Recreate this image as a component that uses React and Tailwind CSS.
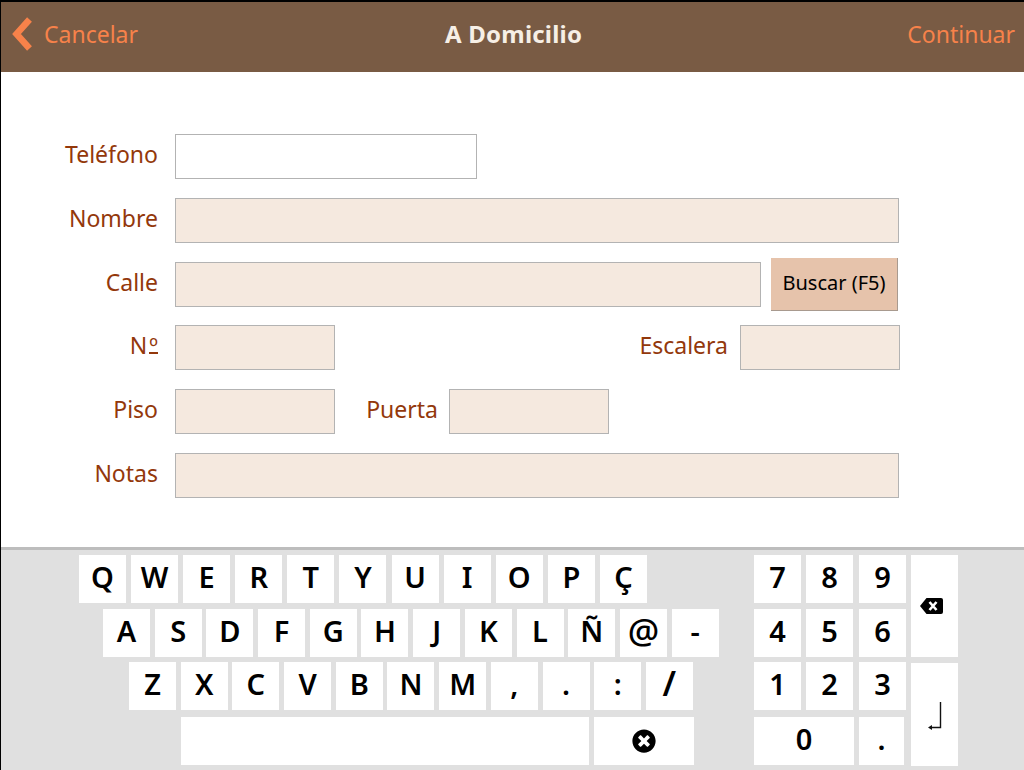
import React from 'react';
import { FaTimesCircle } from 'react-icons/fa';

const Field = ({ className = '', white }) => (
  <div className={`h-[45px] border border-[#b3b3b3] ${white ? 'bg-white' : 'bg-[#f5e9df]'} ${className}`} />
);

const Label = ({ children, className = 'w-[157px]' }) => (
  <span className={`text-right text-[23px] leading-none pb-[4px] text-[#93380b] ${className}`}>{children}</span>
);

const Key = ({ children, className = 'w-[47px]' }) => (
  <div className={`h-[48px] bg-white flex items-center justify-center pb-[6px] text-[29px] font-semibold leading-none text-black ${className}`}>
    {children}
  </div>
);

const big = { '@': 'text-[35px] font-medium', '/': 'text-[34px]' };
const row1 = ['Q', 'W', 'E', 'R', 'T', 'Y', 'U', 'I', 'O', 'P', 'Ç'];
const row2 = ['A', 'S', 'D', 'F', 'G', 'H', 'J', 'K', 'L', 'Ñ', '@', '-'];
const row3 = ['Z', 'X', 'C', 'V', 'B', 'N', 'M', ',', '.', ':', '/'];

const renderKey = (k) => (
  <Key key={k}>{big[k] ? <span className={big[k]}>{k}</span> : k}</Key>
);

const App = () => {
  return (
    <div className="w-[1024px] h-[770px] overflow-hidden bg-white flex flex-col border-l border-l-black font-['Noto_Sans',sans-serif]">
      {/* Header */}
      <header className="h-[72px] shrink-0 border-t-2 border-t-black bg-[#795b44] flex items-center justify-between pl-[10px] pr-[9px] pb-[6px]">
        <div className="flex items-center gap-[11px] text-[23px] text-[#f7824a]">
          <svg width="22" height="34" viewBox="0 0 22 34" fill="none" className="-mt-[1px]">
            <path d="M18.5 2.5L5.5 17L18.5 31.5" stroke="#f7824a" strokeWidth="6.5" />
          </svg>
          <span>Cancelar</span>
        </div>
        <span className="font-bold text-[24px] tracking-[0.2px] text-[#f6efe6] mr-[18px]">A Domicilio</span>
        <span className="text-[23px] text-[#f7824a]">Continuar</span>
      </header>

      {/* Form */}
      <main className="flex-1 pt-[62px] flex flex-col">
        <div className="flex items-center gap-[17px]">
          <Label>Teléfono</Label>
          <Field white className="w-[302px]" />
        </div>
        <div className="flex items-center gap-[17px] mt-[19px]">
          <Label>Nombre</Label>
          <Field className="w-[724px]" />
        </div>
        <div className="flex items-center gap-[17px] mt-[19px]">
          <Label>Calle</Label>
          <Field className="w-[586px]" />
          <button className="-my-[4px] -ml-[7px] h-[53px] w-[127px] pb-[3px] bg-[#e6c3ab] border-b border-r border-[#a89a8f] text-[20px] text-black">
            Buscar (F5)
          </button>
        </div>
        <div className="flex items-center gap-[17px] mt-[18px]">
          <Label>
            N<span className="inline-block ml-[2px] h-[17px] leading-[17px] border-b-2 border-[#93380b]">º</span>
          </Label>
          <Field className="w-[160px]" />
          <Label className="w-[376px]">Escalera</Label>
          <Field className="-ml-[5px] w-[160px]" />
        </div>
        <div className="flex items-center gap-[17px] mt-[19px]">
          <Label>Piso</Label>
          <Field className="w-[160px]" />
          <Label className="ml-[14px] w-[72px]">Puerta</Label>
          <Field className="-ml-[6px] w-[160px]" />
        </div>
        <div className="flex items-center gap-[17px] mt-[19px]">
          <Label>Notas</Label>
          <Field className="w-[724px]" />
        </div>
      </main>

      {/* Keyboard */}
      <footer className="h-[223px] shrink-0 border-t-[3px] border-[#bdbdbd] bg-[#e0e0e0] flex pt-[5px]">
        <div className="w-[753px] shrink-0 flex flex-col">
          <div className="flex gap-[5.1px] pl-[78px]">
            {row1.map(renderKey)}
          </div>
          <div className="flex gap-[4.7px] pl-[102px] mt-[6px]">
            {row2.map(renderKey)}
          </div>
          <div className="flex gap-[4.7px] pl-[128px] mt-[5px]">
            {row3.map(renderKey)}
          </div>
          <div className="flex gap-[5px] pl-[180px] mt-[7px]">
            <Key className="w-[408px]" />
            <Key className="w-[100px] !pb-0"><FaTimesCircle size={24} /></Key>
          </div>
        </div>
        <div className="w-[152px] shrink-0 flex flex-col">
          <div className="flex gap-[5px]">
            <Key>7</Key>
            <Key>8</Key>
            <Key className="w-[47px] ml-[1px]">9</Key>
          </div>
          <div className="flex gap-[5px] mt-[6px]">
            <Key>4</Key>
            <Key>5</Key>
            <Key className="w-[47px] ml-[1px]">6</Key>
          </div>
          <div className="flex gap-[5px] mt-[5px]">
            <Key>1</Key>
            <Key>2</Key>
            <Key className="w-[47px] ml-[1px]">3</Key>
          </div>
          <div className="flex gap-[5px] mt-[7px]">
            <Key className="w-[100px]">0</Key>
            <Key className="w-[45px]">.</Key>
          </div>
        </div>
        <div className="ml-[5px] w-[47px] flex flex-col">
          <div className="h-[102px] bg-white flex justify-start pl-[9px] pt-[43px]">
            <svg width="23" height="16" viewBox="0 0 23 16" className="block">
              <path d="M6.5 0H21a2 2 0 0 1 2 2V14a2 2 0 0 1-2 2H6.5L0 8Z" fill="#000" />
              <path d="M9.5 4L16.5 12M16.5 4L9.5 12" stroke="#fff" strokeWidth="2.6" />
            </svg>
          </div>
          <div className="h-[103px] mt-[6px] bg-white flex justify-center pt-[39px]">
            <svg width="14" height="30" viewBox="0 0 14 30" fill="none" className="block">
              <path d="M12.5 0V25.5H3" stroke="#111" strokeWidth="1.4" />
              <path d="M0 25.5L4 23V28Z" fill="#111" />
            </svg>
          </div>
        </div>
      </footer>
    </div>
  );
};

export default App;
